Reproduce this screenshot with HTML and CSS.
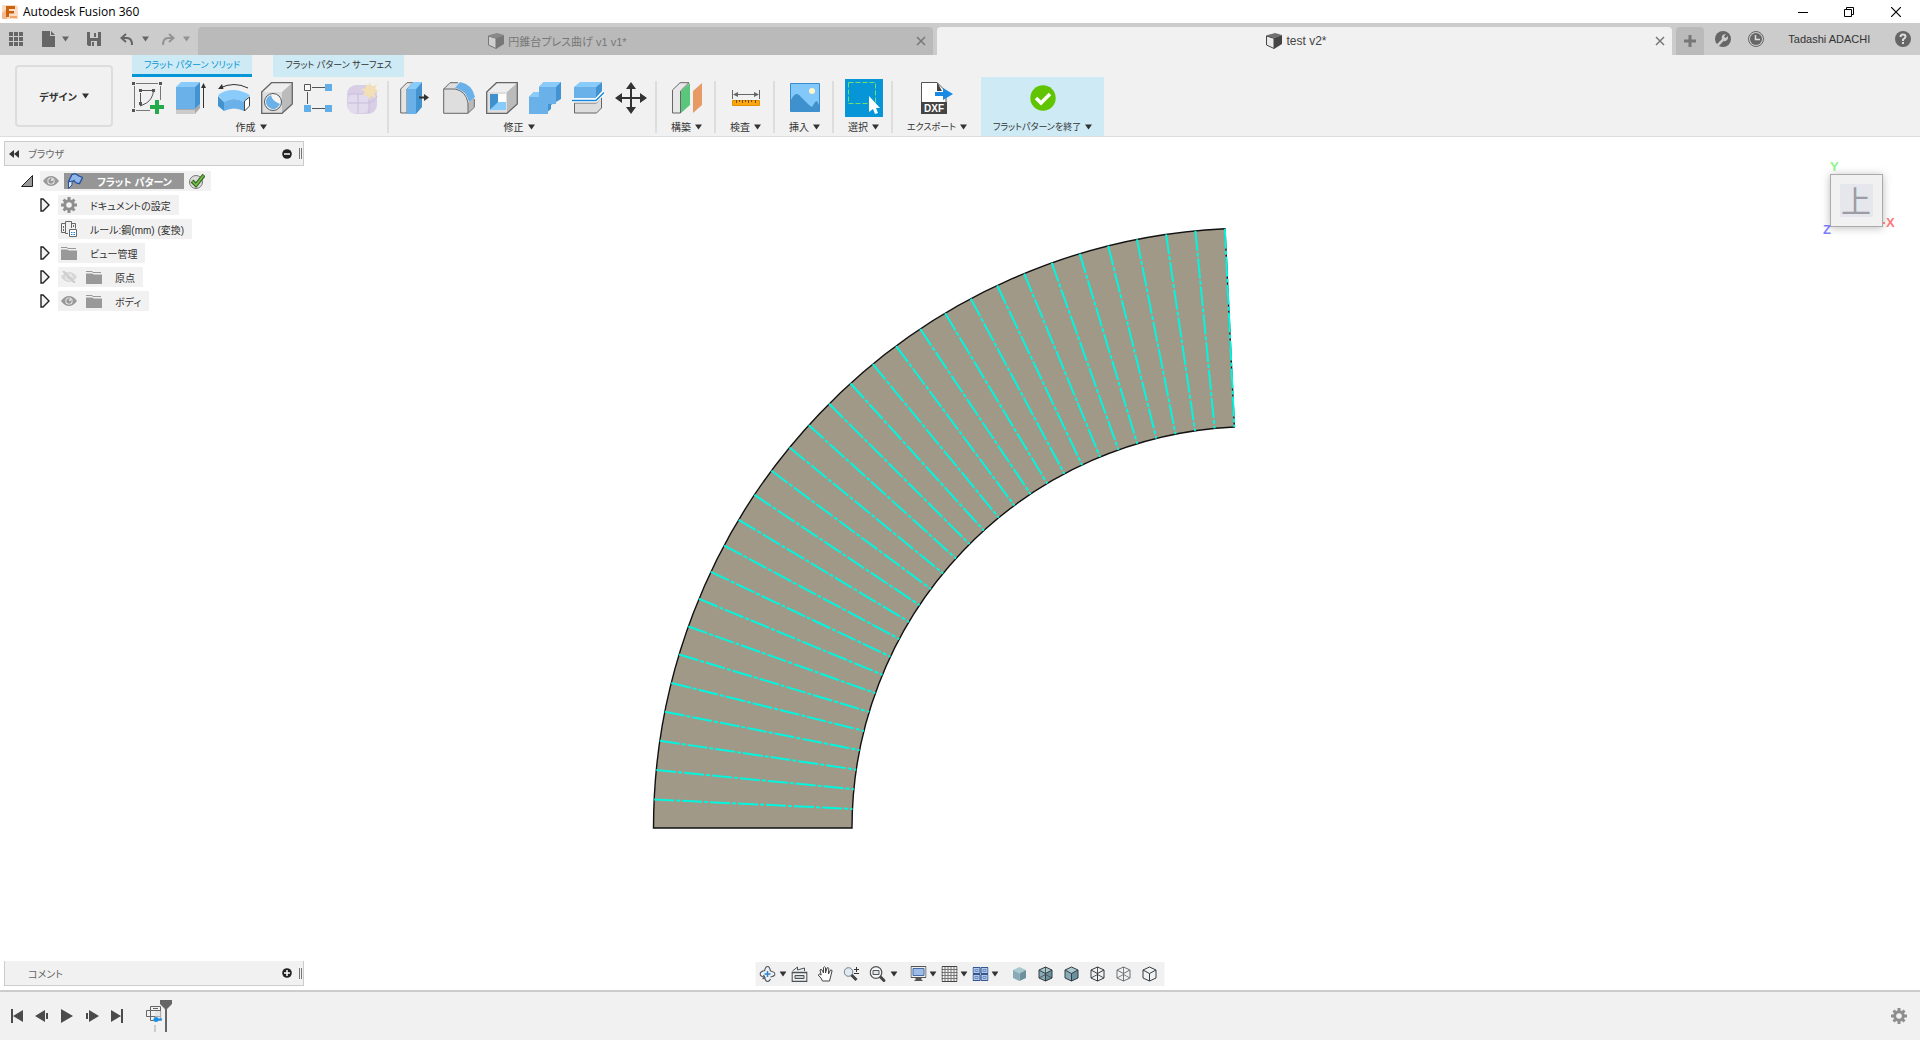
FILE: index.html
```html
<!DOCTYPE html>
<html lang="ja">

<head>
    <meta charset="UTF-8">
    <meta name="viewport" content="width=device-width, initial-scale=1.0">
    <title>Autodesk Fusion 360</title>
    <link rel="stylesheet" href="styles.css">
</head>

<body>
    <!-- shared icons -->
    <svg class="defs" aria-hidden="true">
        <symbol id="caret" viewBox="0 0 7 6"><path d="M0 0.5h7L3.5 5.5z" fill="currentColor" /></symbol>
        <symbol id="folder" viewBox="0 0 16 14"><path d="M0 1h6l1 1h8v1H7L6 2H0zM0 3.500h6l2 1h8V14H0z" fill="#999" /></symbol>
        <symbol id="eye" viewBox="0 0 16 12">
            <path d="M0 6Q3.500 1 8 1t8 5q-3.500 5-8 5T0 6z" fill="#999" />
            <circle cx="8" cy="6" r="3.600" fill="#f1f1f1" /><circle cx="8" cy="6" r="2.700" fill="#999" /><circle cx="9" cy="5" r="1" fill="#f1f1f1" />
        </symbol>
        <symbol id="gear" viewBox="0 0 16 16">
            <path d="M8 0v16M0 8h16M2.500 2.500l11 11M13.500 2.500l-11 11" stroke="currentColor" stroke-width="3" />
            <circle cx="8" cy="8" r="5.800" fill="currentColor" /><circle cx="8" cy="8" r="2.800" fill="#f1f1f1" />
        </symbol>
        <symbol id="expand" viewBox="0 0 10 14"><path d="M1 1h2l6 6-6 6H1z" fill="#f4f4f4" stroke="#222" stroke-width="1.400" /></symbol>
        <symbol id="doc" viewBox="0 0 16 16">
            <path d="M0 2.500 9 0l7 2-8 3z" opacity=".75" fill="currentColor" />
            <path d="M8 5l8-3v9l-8 5z" fill="currentColor" />
            <path d="M.5 3 8 5.300V15.500L.5 12z" fill="#e4e4e4" fill-opacity=".5" stroke="currentColor" />
        </symbol>
        <symbol id="cross" viewBox="0 0 10 10"><path d="M1 1l8 8M9 1 1 9" stroke="currentColor" stroke-width="1.500" /></symbol>
        <symbol id="cube-solid" viewBox="0 0 16 16">
            <path d="M8 1l6.500 3L8 7.500 1.500 4z" fill="#a9c8d0" /><path d="M1.500 4 8 7.500V15l-6.500-3z" fill="#86abb7" /><path d="M14.500 4 8 7.500V15l6.500-3z" fill="#6b919e" />
        </symbol>
        <symbol id="cube-line" viewBox="0 0 16 16">
            <path d="M8 1l6.500 3v8L8 15l-6.500-3V4zM1.500 4 8 7.500 14.500 4M8 7.500V15" fill="none" stroke="#333c42" />
        </symbol>
        <symbol id="cube-back" viewBox="0 0 16 16"><path d="M8 1v7.500M1.500 12 8 8.500l6.500 3.500" fill="none" stroke="currentColor" /></symbol>
    </svg>

    <header class="titlebar">
        <svg class="logo" width="16" height="16" viewBox="0 0 16 16">
            <path d="M0 1h14l2 2v12H0z" fill="#fbdcc3" /><path d="M0 15V9l5-4v10z" fill="#f5b98b" />
            <path d="M4 2h9v3H7v2h5v2.500H7V13H4z" fill="#c9620f" /><path d="M8 12h7v2H8z" fill="#f3a566" />
        </svg>
        <h1>Autodesk Fusion 360</h1>
        <div class="window-buttons">
            <button aria-label="最小化"><svg width="10" height="10"><path d="M0 5.500h10" stroke="#000" /></svg></button>
            <button aria-label="元に戻す"><svg width="10" height="10" fill="none" stroke="#000"><path d="M.5 2.500h7v7h-7zM2.500 2V.5h7v7H8" /></svg></button>
            <button aria-label="閉じる"><svg width="10" height="10"><path d="M0 0l10 10M10 0 0 10" stroke="#000" stroke-width="1.200" /></svg></button>
        </div>
    </header>

    <div class="appbar">
        <div class="quick">
            <button class="q-grid" aria-label="データ パネル"><svg width="14" height="14" fill="#666"><path d="M0 0h4v4H0zM5 0h4v4H5zM10 0h4v4h-4zM0 5h4v4H0zM5 5h4v4H5zM10 5h4v4h-4zM0 10h4v4H0zM5 10h4v4H5zM10 10h4v4h-4z" /></svg></button>
            <button class="q-menu" aria-label="ファイル"><svg width="14" height="16" fill="#666"><path d="M0 0h8v5h5v11H0zM9 0l4 4H9z" /></svg><svg class="caret"><use href="#caret" /></svg></button>
            <button class="q-save" aria-label="保存"><svg width="14" height="14"><path d="M0 0h14v14H1.500L0 12.500z" fill="#666" /><path d="M3 0h8v6H3zM4 9h6v5H4z" fill="#ccc" /><path d="M7 1h2v4H7zM5 10h2v4H5z" fill="#666" /></svg></button>
            <button class="q-menu history" aria-label="元に戻す"><svg width="14" height="13"><path d="M6 1 1.500 5 6 9M2 5h5q5 0 5 7" fill="none" stroke="#666" stroke-width="2" /></svg><svg class="caret"><use href="#caret" /></svg></button>
            <button class="q-menu history dim" aria-label="やり直し"><svg width="14" height="13"><path d="M8 1l4.500 4L8 9M12 5H7q-5 0-5 7" fill="none" stroke="#666" stroke-width="2" /></svg><svg class="caret"><use href="#caret" /></svg></button>
        </div>
        <div class="doc-tabs">
            <div class="doc-tab">
                <button class="doc-name"><svg width="16" height="16"><use href="#doc" /></svg>円錐台プレス曲げ v1 v1*</button>
                <button class="doc-close" aria-label="閉じる"><svg width="10" height="10"><use href="#cross" /></svg></button>
            </div>
            <div class="doc-tab active">
                <button class="doc-name"><svg width="16" height="16"><use href="#doc" /></svg>test v2*</button>
                <button class="doc-close" aria-label="閉じる"><svg width="10" height="10"><use href="#cross" /></svg></button>
            </div>
        </div>
        <div class="account">
            <button class="new-tab" aria-label="新規"><svg width="14" height="14"><path d="M7 1v12M1 7h12" stroke="#777" stroke-width="3" /></svg></button>
            <button aria-label="拡張機能"><svg width="16" height="16"><circle cx="8" cy="8" r="8" fill="#666" /><path d="M1 14l6-6q-1-3 1.500-4.500L11 3 9 5.500l1.500 1.500L13 5q.5 3-1.500 4.500-1.500 1-3 .5L4 15z" fill="#ccc" /></svg></button>
            <button aria-label="ジョブ ステータス"><svg width="16" height="16"><circle cx="8" cy="8" r="7.500" fill="none" stroke="#666" /><circle cx="8" cy="8" r="6" fill="#666" /><path d="M7.500 4v4.500H12" fill="none" stroke="#ddd" stroke-width="1.500" /></svg></button>
            <button class="user">Tadashi ADACHI</button>
            <button aria-label="ヘルプ"><svg width="16" height="16"><circle cx="8" cy="8" r="8" fill="#666" /><path d="M5.500 6q0-2.500 2.500-2.500t2.500 2.200Q10.500 7 8 8.500V10" fill="none" stroke="#ddd" stroke-width="2" /><path d="M7 11h2v2H7z" fill="#ddd" /></svg></button>
        </div>
    </div>

    <div class="ribbon">
        <button class="workspace">デザイン <svg class="caret"><use href="#caret" /></svg></button>
        <div class="ribbon-main">
            <nav class="ribbon-tabs">
                <button class="active">フラット パターン ソリッド</button>
                <button>フラット パターン サーフェス</button>
            </nav>
            <div class="panels">
                <section class="panel wide">
                    <div class="tools">
                        <button aria-label="スケッチを作成"><svg width="32" height="32">
                            <path d="M2.500 4v22M4 1.500h22M28.500 4v14M4 28.500h14" stroke="#777" /><path d="M8.500 11v13l6-3q6-4 7-12M9 8.500h11" fill="none" stroke="#555" />
                            <path d="M0 0h3v3H0zM27 0h3v3h-3zM0 27h3v3H0zM7 7h3v3H7zM20 7h3v3h-3zM7 20h3v3H7z" fill="#555" />
                            <path d="M23 18h4v5h5v4h-5v5h-4v-5h-5v-4h5z" fill="#23ab4b" />
                        </svg></button>
                        <button aria-label="押し出し"><svg width="32" height="32">
                            <path d="M1 27h19l5-5v4l-5 6H1z" fill="#aaa" /><path d="M1 28h19v4H1z" fill="#ccc" />
                            <path d="M1 5h19v22H1z" fill="#69b1e8" /><path d="M1 5l5-5h19l-5 5z" fill="#89ccfb" /><path d="M20 5l5-5v22l-5 5z" fill="#4393d0" />
                            <path d="M28.500 3v23" stroke="#333" /><path d="M28.500 1l2.500 5h-5z" fill="#333" />
                        </svg></button>
                        <button aria-label="曲げ"><svg width="32" height="32">
                            <path d="M0 13Q14 3 32 13l-6 7q-10-6-20 0z" fill="#89ccfb" /><path d="M0 14l6 6v9l-6-5z" fill="#4393d0" /><path d="M6 20q10-6 20 0v9q-10-5-20 0z" fill="#69b1e8" />
                            <path d="M26.500 19l5-4v9l-5 5z" fill="#fff" stroke="#444" /><path d="M2 6q14-7 28 0" fill="none" stroke="#333" /><path d="M0 7l4-5 1.500 5z" fill="#333" />
                        </svg></button>
                        <button aria-label="穴"><svg width="32" height="32">
                            <path d="M1 10 11 1h20L21 10z" fill="#eee" /><path d="M21 10 31 1v21L21 31z" fill="#bbb" /><path d="M1 10h20v21H1z" fill="#dedede" />
                            <path d="M.7 10 10.500.7h20.800V22L21 31.300H.7z" fill="none" stroke="#666" stroke-width="1.300" />
                            <circle cx="12" cy="20" r="8.500" fill="#f6f6f6" stroke="#555" /><path d="M10 13q1 6 9 9-3 6-8 5-6-2-6-7 0-5 5-7z" fill="#69b1e8" />
                        </svg></button>
                        <button aria-label="矩形状パターン"><svg width="32" height="32">
                            <path d="M8 5.500h13M3.500 10v12M8 26.500h13" stroke="#555" /><path d="M.5 2.500h6v6h-6z" fill="#f8f8f8" stroke="#555" />
                            <path d="M21 2h7v7h-7zM0 23h7v7H0zM21 23h7v7h-7z" fill="#62aee8" />
                        </svg></button>
                        <button aria-label="フォームを作成"><svg width="32" height="32">
                            <rect x="0" y="3" width="30" height="29" rx="9" fill="#d8cfe6" /><rect x="1" y="12" width="21" height="19" rx="6" fill="#e2daed" />
                            <path d="M1 21h20q6-1 9-7M11 12v19M2 12h20l5-8M22 12v19" fill="none" stroke="#c9bcdc" />
                            <path d="M23 0l2 5 5-3-2 5 4 2-5 2 2 5-5-2-2 4-2-5-5 1 3-4-4-3 5-1-1-4 4 2z" fill="#f2dfb5" />
                        </svg></button>
                    </div>
                    <button class="panel-name">作成<svg class="caret"><use href="#caret" /></svg></button>
                </section>
                <section class="panel wide">
                    <div class="tools">
                        <button aria-label="プレス/プル"><svg width="32" height="32">
                            <path d="M.7 7 7 .7h6L7 7v24H.7z" fill="#e4e4e4" stroke="#666" /><path d="M7 7h9v25H7z" fill="#69b1e8" /><path d="M7 7l6-7h9l-6 7z" fill="#89ccfb" /><path d="M16 7l6-7v25l-6 7z" fill="#4393d0" />
                            <path d="M19 15.500h6" stroke="#333" stroke-width="2" /><path d="M24 12l5 3.500-5 3.500z" fill="#333" />
                        </svg></button>
                        <button aria-label="フィレット"><svg width="32" height="32">
                            <path d="M.7 7 7 .7h9L12 6.500q11 2 13 15V31H.7z" fill="#dedede" /><path d="M25 21l6-6v10l-6 6z" fill="#bbb" />
                            <path d="M12 6l5-6q12 2 15 15l-6 5Q23 8 12 6z" fill="#69b1e8" /><path d="M15 .7H7L.7 7v24.300H25l6.300-6V17M.7 7H12q11 2 13 14v10" fill="none" stroke="#666" />
                        </svg></button>
                        <button aria-label="シェル"><svg width="32" height="32">
                            <path d="M1 10 11 1h20L21 10z" fill="#eee" /><path d="M21 10 31 1v21L21 31z" fill="#bbb" /><path d="M1 10h20v21H1z" fill="#dedede" />
                            <path d="M.7 10 10.500.7h20.800V22L21 31.300H.7z" fill="none" stroke="#666" stroke-width="1.300" />
                            <path d="M4 12h16v16H4z" fill="#fff" /><path d="M4 12h8v9l-8 7z" fill="#3f91cd" /><path d="M4 28l8-8h8v8z" fill="#89ccfb" />
                        </svg></button>
                        <button aria-label="結合"><svg width="32" height="32">
                            <path d="M10 5l5-5h17v17l-10 6v4l-6 5H0V15l5-5h5z" fill="#4393d0" /><path d="M10 5h17v17h-8v10H0V15h10z" fill="#69b1e8" /><path d="M10 5l5-5h17l-5 5zM0 15l5-5h5v5z" fill="#89ccfb" />
                        </svg></button>
                        <button aria-label="面を分割"><svg width="32" height="32">
                            <path d="M2 5l6-5h22l-6 5z" fill="#89ccfb" /><path d="M2 5h22v11H2z" fill="#69b1e8" /><path d="M24 5l6-5v9l-6 7z" fill="#4393d0" />
                            <path d="M2.500 21h22l5-6v11l-5 5h-22z" fill="#ddd" stroke="#666" /><path d="M0 18.500h24l8-8" fill="none" stroke="#fff" stroke-width="4" /><path d="M0 18.500h24l8-8" fill="none" stroke="#1688dd" stroke-width="1.500" />
                        </svg></button>
                        <button aria-label="移動/コピー"><svg width="32" height="32">
                            <path d="M16 5v22M5 16h22" stroke="#333" stroke-width="2" /><path d="M16 0l5 7H11zM16 32l5-7H11zM0 16l7-5v10zM32 16l-7-5v10z" fill="#333" />
                        </svg></button>
                    </div>
                    <button class="panel-name">修正<svg class="caret"><use href="#caret" /></svg></button>
                </section>
                <section class="panel">
                    <div class="tools"><button aria-label="オフセット平面"><svg width="32" height="32">
                        <path d="M1.500 8 9 .7h9L9.500 9v22h-8z" fill="#e8e8e8" stroke="#666" /><path d="M10 9l9-8v22l-9 8z" fill="#5ac67c" /><path d="M22 9l9-8v22l-9 8z" fill="#e89a66" />
                    </svg></button></div>
                    <button class="panel-name">構築<svg class="caret"><use href="#caret" /></svg></button>
                </section>
                <section class="panel">
                    <div class="tools"><button aria-label="計測"><svg width="32" height="32">
                        <path d="M2.500 8v9M29.500 8v9M5 12.500h22" stroke="#666" /><path d="M3 12.500 8 10v5zM29 12.500 24 10v5z" fill="#666" />
                        <path d="M2.500 18.500h27v5h-27z" fill="#fba60e" stroke="#e29100" /><path d="M6.500 18v3M9.500 18v2M12.500 18v3M15.500 18v2M18.500 18v3M21.500 18v2M25.500 18v3" stroke="#775000" />
                    </svg></button></div>
                    <button class="panel-name">検査<svg class="caret"><use href="#caret" /></svg></button>
                </section>
                <section class="panel">
                    <div class="tools"><button aria-label="キャンバス"><svg width="32" height="32">
                        <path d="M1.500 1.500h29v28h-29z" fill="#82c8fb" stroke="#3a8dcb" /><path d="M2 18q5-10 10-3l8 8 3 2 3-5 2-1 2 4v7H2z" fill="#3f91cd" /><circle cx="23" cy="9" r="3" fill="#fcf6ca" />
                    </svg></button></div>
                    <button class="panel-name">挿入<svg class="caret"><use href="#caret" /></svg></button>
                </section>
                <section class="panel">
                    <div class="tools"><button class="selected" aria-label="選択"><svg width="38" height="38">
                        <path d="M3.500 3.500h27v21h-27z" fill="none" stroke="#6fdf75" stroke-dasharray="5 2" /><path d="M24 17v16l4-3 2 5 3-1-2-5h4z" fill="#fff" />
                    </svg></button></div>
                    <button class="panel-name">選択<svg class="caret"><use href="#caret" /></svg></button>
                </section>
                <section class="panel export">
                    <div class="tools"><button aria-label="DXFを書き出し"><svg width="32" height="32">
                        <path d="M.5 20V.5H16l9 9V20" fill="#fff" stroke="#555" /><path d="M16 0l5 9h-5z" fill="#444" /><path d="M0 20h26v12H0z" fill="#444" />
                        <text x="13" y="30" class="dxf">DXF</text><path d="M14 10h8V6l10 6-10 6v-4h-8z" fill="#198ae3" />
                    </svg></button></div>
                    <button class="panel-name">エクスポート<svg class="caret"><use href="#caret" /></svg></button>
                </section>
                <section class="panel finish">
                    <div class="tools"><button aria-label="終了"><svg width="26" height="26"><circle cx="13" cy="13" r="12.700" fill="#60c400" /><path d="M6 13l5 5 9-9" fill="none" stroke="#fff" stroke-width="3.500" /></svg></button></div>
                    <button class="panel-name">フラットパターンを終了<svg class="caret"><use href="#caret" /></svg></button>
                </section>
            </div>
        </div>
    </div>

    <main class="canvas">
        <svg class="model" viewBox="0 137 1920 853">
            <path d="M653.500 828A600 600 0 0 1 1225 228.700L1234.400 427A401.500 401.500 0 0 0 852 828z" fill="#a09988" stroke="#111" stroke-width="1.400" />
            <g id="bendLines"></g>
        </svg>

        <aside class="browser">
            <div class="dock">
                <svg width="10" height="8"><path d="M5 0v8L0 4zM10 0v8L5 4z" fill="#333" /></svg>
                <h2>ブラウザ</h2>
                <button aria-label="最小化"><svg width="10" height="10"><circle cx="5" cy="5" r="4.800" fill="#222" /><path d="M2 5h6" stroke="#fff" stroke-width="1.500" /></svg></button>
                <i class="grip"></i>
            </div>
            <ul class="tree">
                <li class="root">
                    <button class="toggle" aria-label="折りたたむ"><svg width="12" height="12"><path d="M11.500.5v11H.5z" fill="#999" stroke="#222" /></svg></button>
                    <div class="node">
                        <svg width="16" height="12"><use href="#eye" /></svg>
                        <button class="current"><svg width="16" height="16"><path d="M1.500 8.500 5 1.500q4-1.500 6 1l4.500 2-3 6q-4 0-5.500-3L4.500 9z" fill="#8eb8ea" stroke="#27509c" stroke-width="1.300" /><path d="M1.500 9 5 8v4l-3.500 3.500z" fill="#dce8f5" stroke="#27509c" /></svg>フラット パターン</button>
                        <svg width="16" height="16"><circle cx="7" cy="9" r="6.500" fill="#ddd" stroke="#777" /><path d="M3 8l4 4 8-10" fill="none" stroke="#386c22" stroke-width="4" /><path d="M3.500 8.500 7 12l7.500-9.500" fill="none" stroke="#7cbf52" stroke-width="1.500" /></svg>
                    </div>
                </li>
                <li>
                    <button class="toggle" aria-label="展開"><svg width="10" height="14"><use href="#expand" /></svg></button>
                    <div class="node"><svg class="gray" width="16" height="16"><use href="#gear" /></svg><span>ドキュメントの設定</span></div>
                </li>
                <li>
                    <i class="toggle"></i>
                    <div class="node"><svg width="16" height="16" fill="none" stroke="#666"><path d="M7 12.500H4.500v-10M4.500 2.500h-4v9h4M4.500 3V.5h6v3M10.500 2.500h4v5M10.500 3v4" /><path d="M2.500 5v5M12.500 4v3" stroke-dasharray="2 1" /><path d="M8.500 8.500h7v7h-7z" fill="#fff" /><path d="M10 11.500h1.500M12.500 11.500H14M10 13.500h1.500M12.500 13.500H14" stroke="#1685d8" /></svg><span>ルール:鋼(mm) (変換)</span></div>
                </li>
                <li>
                    <button class="toggle" aria-label="展開"><svg width="10" height="14"><use href="#expand" /></svg></button>
                    <div class="node"><svg width="16" height="14"><use href="#folder" /></svg><span>ビュー管理</span></div>
                </li>
                <li>
                    <button class="toggle" aria-label="展開"><svg width="10" height="14"><use href="#expand" /></svg></button>
                    <div class="node"><svg class="off" width="16" height="12"><use href="#eye" /><path d="M2 0l12 12" stroke="#777" stroke-width="2" /></svg><svg width="16" height="14"><use href="#folder" /></svg><span>原点</span></div>
                </li>
                <li>
                    <button class="toggle" aria-label="展開"><svg width="10" height="14"><use href="#expand" /></svg></button>
                    <div class="node"><svg width="16" height="12"><use href="#eye" /></svg><svg width="16" height="14"><use href="#folder" /></svg><span>ボディ</span></div>
                </li>
            </ul>
        </aside>

        <svg class="viewcube" width="90" height="90">
            <text x="10" y="16" fill="#8df58d">Y</text>
            <text x="66" y="72" fill="#ff7676">X</text>
            <rect class="face" x="10.500" y="19.500" width="52" height="52" />
            <rect x="20" y="29" width="33" height="33" fill="#e6e7ec" />
            <text class="top" x="36" y="57">上</text>
            <text x="3" y="79" fill="#7d7dfa">Z</text>
            <path d="M63 67h2v2h-2z" fill="#ff7676" />
        </svg>

        <div class="comments dock">
            <h2>コメント</h2>
            <button aria-label="展開"><svg width="10" height="10"><circle cx="5" cy="5" r="4.800" fill="#222" /><path d="M2 5h6M5 2v6" stroke="#fff" stroke-width="1.500" /></svg></button>
            <i class="grip"></i>
        </div>

        <div class="navbar">
            <button class="orbit" aria-label="オービット"><svg width="16" height="16" fill="none" stroke="#555c66"><path d="M5 5q1-4.500 3-4.500T11 5M5 11q1 4.500 3 4.500t3-2.500M5 4.500Q.5 6 .5 8T5 11.500M3 13l2.500-1.500L4 9M11 5q4.500 1 4.500 3T11 11" stroke-width="1.200" /><path d="M8 5v6M5 8h6" stroke="#2a83d5" stroke-width="1.500" /></svg></button>
            <button class="more" aria-label="オービットのオプション"><svg class="caret"><use href="#caret" /></svg></button>
            <button aria-label="ビュー正面"><svg width="16" height="16" fill="none" stroke="#4a5058"><path d="M.5 6.500h15v9H.5z" stroke-width="1.400" /><path d="M3.500 9.500h9v3h-9z" fill="#ccc" /><path d="M1 5l5-4v3l7-2v3" /></svg></button>
            <button aria-label="画面移動"><svg width="16" height="16"><path d="M5 15Q4 12 .7 9q.6-2 3 0L2.500 4q1-1.500 2 0L6 7V1.500q1-1.500 2 0V7l1.500-5q1.500-1 1.700.5L11 8l2-4q1.500-.5 1.500 1L13 11l-1 4z" fill="#fff" stroke="#444" /></svg></button>
            <button aria-label="ズーム"><svg width="16" height="16"><circle cx="5" cy="6" r="4.300" fill="#dcebf2" stroke="#778" /><path d="M8 9l5 5" stroke="#444" stroke-width="3" /><path d="M10.500 3.500h5M13 1v5M10.500 7.500h5" stroke="#333" /></svg></button>
            <button aria-label="窓ズーム"><svg width="16" height="16"><circle cx="6.500" cy="6.500" r="5.800" fill="#f4f8fa" stroke="#555" stroke-width="1.300" /><path d="M3.500 4.500h6v4h-6z" fill="#dfe8ec" stroke="#555" /><path d="M10.500 10.500l5 5" stroke="#444" stroke-width="3" /></svg></button>
            <button class="more" aria-label="ズームのオプション"><svg class="caret"><use href="#caret" /></svg></button>
            <i class="gap"></i>
            <button aria-label="表示設定"><svg width="16" height="16"><path d="M.5.5h15v11H.5z" fill="#eee" stroke="#555" /><path d="M2.500 2.500h11v7h-11z" fill="#9dbde8" stroke="#466da8" /><path d="M5 12h6v2H5zM4 14h8v1H4z" fill="#555" /></svg></button>
            <button class="more tight" aria-label="表示設定のオプション"><svg class="caret"><use href="#caret" /></svg></button>
            <button aria-label="グリッド"><svg width="16" height="16" fill="none" stroke="#777"><path d="M3.500 0v16M6.500 0v16M9.500 0v16M12.500 0v16M0 3.500h16M0 6.500h16M0 9.500h16M0 12.500h16" /><path d="M.5.5h15v15H.5z" stroke="#444" /></svg></button>
            <button class="more tight" aria-label="グリッドのオプション"><svg class="caret"><use href="#caret" /></svg></button>
            <button aria-label="ビューポート"><svg width="16" height="16" fill="#b4c9e9" stroke="#34558e"><path d="M.5 1.500h7v6h-7zM8.500 1.500h7v6h-7zM.5 8.500h7v6h-7zM8.500 8.500h7v6h-7z" /><path d="M2.500 3.500h3v2h-3zM10.500 3.500h3v2h-3zM2.500 10.500h3v2h-3zM10.500 10.500h3v2h-3z" stroke="#6b8fc6" /></svg></button>
            <button class="more tight" aria-label="ビューポートのオプション"><svg class="caret"><use href="#caret" /></svg></button>
            <i class="gap"></i>
            <button aria-label="シェーディング"><svg width="16" height="16"><use href="#cube-solid" /></svg></button>
            <button aria-label="隠れたエッジ付きシェーディング"><svg width="16" height="16"><use href="#cube-solid" /><use href="#cube-back" /><use href="#cube-line" /></svg></button>
            <button aria-label="エッジ付きシェーディング"><svg width="16" height="16"><use href="#cube-solid" /><use href="#cube-line" /></svg></button>
            <button aria-label="ワイヤフレーム"><svg width="16" height="16"><use href="#cube-back" /><use href="#cube-line" /></svg></button>
            <button class="faint" aria-label="隠れたエッジ付きワイヤフレーム"><svg width="16" height="16"><use href="#cube-back" /><use href="#cube-line" /></svg></button>
            <button aria-label="表示エッジのみ"><svg width="16" height="16"><use href="#cube-line" /></svg></button>
        </div>
    </main>

    <footer class="timeline">
        <div class="playback">
            <button aria-label="先頭へ"><svg width="14" height="14" fill="#4b4b4b"><path d="M1 0h2v14H1zM13 1v12L3 7z" /></svg></button>
            <button aria-label="前へ"><svg width="14" height="14" fill="#4b4b4b"><path d="M10 1v12L0 7zM11 4h2v6h-2z" /></svg></button>
            <button aria-label="再生"><svg width="14" height="14" fill="#4b4b4b"><path d="M1 0l12 7-12 7z" /></svg></button>
            <button aria-label="次へ"><svg width="14" height="14" fill="#4b4b4b"><path d="M4 1v12l10-6zM1 4h2v6H1z" /></svg></button>
            <button aria-label="末尾へ"><svg width="14" height="14" fill="#4b4b4b"><path d="M11 0h2v14h-2zM1 1v12l10-6z" /></svg></button>
        </div>
        <button class="feature" aria-label="フラット パターン"><svg width="28" height="34">
            <path d="M5.500 7.500h10v14h-10zM1.500 11.500h14v6h-14zM8 9.500h5" fill="none" stroke="#666" /><path d="M10 12h7v10h-7z" fill="#ddd" opacity=".6" />
            <circle cx="11" cy="20.500" r="2.500" fill="#1b8fe6" /><path d="M11 20.500h6" stroke="#1b8fe6" stroke-width="2" /><path d="M10 26v7" stroke="#ccc" stroke-width="2" />
            <path d="M15 1h12v4l-5 5v23h-2V10l-5-5z" fill="#666" />
        </svg></button>
        <button class="settings" aria-label="設定"><svg class="gray" width="16" height="16"><use href="#gear" /></svg></button>
    </footer>

    <script>
        // 31 bend lines around the cone centre, the last one lies on the end edge
        var cx = 1253.5, cy = 828, outer = 600, inner = 401.5;
        var start = 2.72, step = 2.818;
        var lines = '';
        for (var i = 0; i < 31; i++) {
            var a = (start + i * step) * Math.PI / 180;
            lines += `<line x1="${cx - outer * Math.cos(a)}" y1="${cy - outer * Math.sin(a)}" x2="${cx - inner * Math.cos(a)}" y2="${cy - inner * Math.sin(a)}"/>`;
        }
        document.getElementById('bendLines').innerHTML = lines;
    </script>
</body>

</html>
```
FILE: styles.css
```css
* {
    box-sizing: border-box;
}

body {
    margin: 0;
    min-height: 100vh;
    display: flex;
    flex-direction: column;
    font-family: "Liberation Sans", "Noto Sans CJK JP", sans-serif;
    font-size: 10px;
    font-feature-settings: "palt";
    color: #333;
    background: #fff;
}

button {
    display: flex;
    align-items: center;
    justify-content: center;
    padding: 0;
    border: none;
    background: none;
    color: inherit;
    font: inherit;
    font-feature-settings: inherit;
    white-space: nowrap;
    cursor: pointer;
}

svg {
    display: block;
    flex: none;
}

h1,
h2 {
    margin: 0;
    font-weight: normal;
}

.defs {
    position: absolute;
    width: 0;
    height: 0;
}

.caret {
    width: 7px;
    height: 6px;
    color: #333;
}

/* title bar */
.titlebar {
    display: flex;
    align-items: center;
    height: 23px;
    padding-left: 2px;
}

.titlebar h1 {
    flex: 1;
    margin-left: 5px;
    font-family: "Open Sans", sans-serif;
    font-size: 12px;
    line-height: 22px;
    color: #000;
}

.window-buttons {
    display: flex;
}

.window-buttons button {
    width: 46px;
    height: 20px;
}

.window-buttons button:last-child {
    width: 48px;
}

/* documents bar */
.appbar {
    display: flex;
    height: 32px;
    background: #ccc;
}

.quick {
    display: flex;
    align-items: center;
    width: 198px;
    padding-left: 9px;
}

.q-grid {
    margin-right: 19px;
}

.q-menu {
    gap: 6px;
    margin-right: 14px;
}

.q-menu.history {
    gap: 8px;
    margin-right: 12px;
}

.q-save {
    margin: 0 19px 0 4px;
}

.quick .caret {
    color: #666;
}

.dim {
    opacity: .55;
}

.doc-tabs {
    display: flex;
    flex: 1;
    gap: 4px;
    padding-top: 4px;
}

.doc-tab {
    display: flex;
    flex: 1;
    border-radius: 4px 4px 0 0;
    background: #bababa;
    color: #777;
    font-size: 11px;
}

.doc-tab.active {
    background: #f1f1f1;
    color: #444;
    font-size: 12px;
}

.doc-name {
    flex: 1;
    gap: 4px;
    padding-left: 6px;
}

.doc-close {
    width: 22px;
    padding-right: 2px;
    color: #777;
}

.account {
    display: flex;
    align-items: center;
    justify-content: space-between;
    width: 248px;
    padding: 0 9px 0 4px;
}

.new-tab {
    align-self: flex-end;
    width: 28px;
    height: 28px;
    margin-right: -6px;
    border-radius: 4px 4px 0 0;
    background: #bababa;
}

.user {
    padding: 0 8px;
    font-size: 11px;
}

/* ribbon */
.ribbon {
    display: flex;
    height: 82px;
    background: #f1f1f1;
    border-bottom: 1px solid #ddd;
}

.workspace {
    width: 98px;
    height: 62px;
    margin: 10px 19px 0 15px;
    gap: 5px;
    border: 2px solid #ddd;
    border-radius: 4px;
    font-weight: bold;
}

.ribbon-tabs {
    display: flex;
    gap: 21px;
    height: 22px;
}

.ribbon-tabs button {
    padding: 0 12px;
    background: #cdeaf5;
    border-bottom: 3px solid #cdeaf5;
    font-size: 9px;
}

.ribbon-tabs .active {
    color: #0696d7;
    border-color: #0696d7;
}

.panels {
    display: flex;
    height: 59px;
}

.panel {
    position: relative;
    width: 59px;
    display: flex;
    flex-direction: column;
    align-items: center;
}

.panel.wide {
    width: auto;
    padding: 0 10px 0 11px;
}

.panel.wide:first-child {
    padding-left: 0;
}

.panel:not(.export):not(.finish)::after {
    content: "";
    position: absolute;
    right: 0;
    top: 4px;
    width: 2px;
    height: 52px;
    background: #ddd;
}

.tools {
    display: flex;
    align-items: center;
    gap: 11px;
    height: 42px;
}

.selected {
    background: #0696d7;
}

.panel-name {
    gap: 4px;
    height: 15px;
}

.wide .panel-name {
    margin-right: 9px;
}

.panel.export {
    width: 88px;
    font-size: 9px;
}

.panel.finish {
    width: 123px;
    background: #cdeaf5;
    font-size: 9px;
}

.dxf {
    font-size: 10px;
    font-weight: bold;
    text-anchor: middle;
    fill: #fff;
}

/* canvas */
.canvas {
    position: relative;
    flex: 1;
    min-height: 400px;
}

.model {
    position: absolute;
    width: 100%;
    height: 100%;
}

#bendLines {
    stroke: #04f5de;
    stroke-width: 2px;
    stroke-dasharray: 20 2 4 2;
}

.browser {
    position: absolute;
    left: 4px;
    top: 4px;
    width: 300px;
}

.dock {
    display: flex;
    align-items: center;
    height: 25px;
    padding-left: 4px;
    border: 1px solid #ccc;
    background: #f1f1f1;
}

.dock h2 {
    flex: 1;
    margin-left: 9px;
    font-size: 10px;
    color: #666;
}

.grip {
    width: 3px;
    height: 11px;
    margin: 0 1px 0 7px;
    border: solid #777;
    border-width: 0 1px;
}

.comments {
    position: absolute;
    left: 4px;
    bottom: 4px;
    width: 300px;
    border-top: none;
}

.comments h2 {
    margin-left: 19px;
}

.tree {
    margin: 5px 0 0;
    padding: 0 0 0 36px;
    list-style: none;
}

.tree li {
    display: flex;
    align-items: center;
    height: 20px;
    margin-bottom: 4px;
}

.tree .toggle {
    width: 10px;
    margin-right: 8px;
}

.tree .root {
    margin-left: -19px;
}

.tree .root .toggle {
    width: 12px;
    margin-right: 7px;
}

.node {
    display: flex;
    align-items: center;
    gap: 9px;
    height: 20px;
    padding: 0 8px 0 3px;
    background: #f1f1f1;
}

.node span {
    margin-left: 4px;
}

.root .node {
    gap: 5px;
    padding-right: 6px;
}

.current {
    gap: 14px;
    height: 16px;
    padding: 0 12px 0 3px;
    background: #969696;
    color: #fff;
    font-weight: bold;
}

.gray {
    color: #8e8e8e;
}

.off {
    opacity: .3;
}

.viewcube {
    position: absolute;
    right: 10px;
    top: 18px;
    font-size: 13px;
    font-weight: bold;
}

.viewcube .face {
    fill: #f1f1f1;
    stroke: #aaa;
    filter: drop-shadow(0 1px 4px #bbb);
}

.viewcube .top {
    font-size: 30px;
    font-weight: normal;
    text-anchor: middle;
    fill: #9c9ca6;
}

.navbar {
    position: absolute;
    bottom: 4px;
    left: 50%;
    transform: translateX(-50%);
    display: flex;
    height: 24px;
    padding-right: 2px;
    background: #f1f1f1;
    color: #555;
}

.navbar button {
    width: 26px;
}

.navbar .orbit {
    width: 24px;
}

.navbar .more {
    width: 7px;
}

.navbar .tight {
    margin-left: -2px;
}

.navbar .gap {
    width: 8px;
}

.faint {
    opacity: .7;
}

/* timeline */
.timeline {
    display: flex;
    align-items: center;
    height: 50px;
    padding: 0 13px 0 10px;
    border-top: 2px solid #ccc;
    background: #f1f1f1;
}

.playback {
    display: flex;
    gap: 11px;
}

.feature {
    margin-left: 21px;
}

.settings {
    margin-left: auto;
}
```
